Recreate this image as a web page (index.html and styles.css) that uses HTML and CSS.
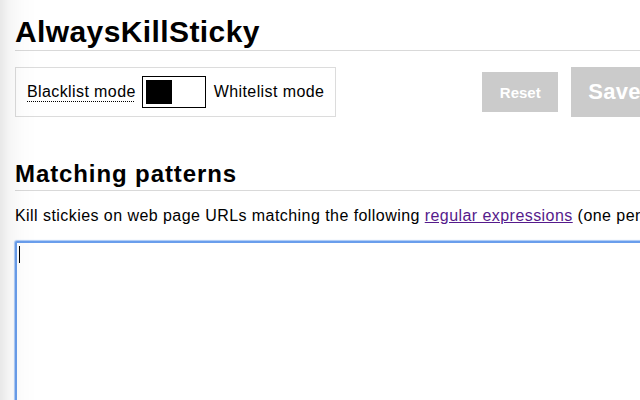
FILE: index.html
```html
<!DOCTYPE html>
<html lang="en">
<head>
<meta charset="utf-8">
<title>AlwaysKillSticky</title>
<link rel="stylesheet" href="styles.css">
</head>
<body>
<div class="shade"></div>
<main class="page">
  <h1 class="title">AlwaysKillSticky</h1>
  <div class="controls">
    <div class="mode-box">
      <span class="mode-label dotted">Blacklist mode</span>
      <span class="switch"><span class="knob"></span></span>
      <span class="mode-label">Whitelist mode</span>
    </div>
    <button class="btn btn-reset">Reset</button>
    <button class="btn btn-save">Save</button>
  </div>
  <h2 class="section-title">Matching patterns</h2>
  <p class="desc">Kill stickies on web page URLs matching the following <a class="link" href="#">regular expressions</a> (one per line):</p>
  <div class="patterns"><span class="caret"></span></div>
</main>
</body>
</html>
```

FILE: styles.css
```css
html, body {
  margin: 0;
  padding: 0;
  background: #ffffff;
  overflow: hidden;
  width: 640px;
  height: 400px;
}

body {
  font-family: "Liberation Sans", Arial, sans-serif;
  color: #000;
}

.shade {
  position: fixed;
  left: 0;
  top: 0;
  width: 40px;
  height: 100%;
  background: linear-gradient(to right, rgba(0,0,0,0.09) 0px, rgba(0,0,0,0.035) 10px, rgba(0,0,0,0.01) 22px, rgba(0,0,0,0) 36px);
  pointer-events: none;
  z-index: 5;
}

.page {
  width: 760px;
  padding-left: 15px;
}

.title {
  margin: 0;
  padding: 15px 0 1px 0;
  font-size: 30px;
  line-height: 34px;
  font-weight: 700;
  letter-spacing: 0.4px;
  border-bottom: 1px solid #d9d9d9;
}

.controls {
  display: flex;
  align-items: center;
  margin-top: 16px;
  height: 50px;
}

.mode-box {
  display: flex;
  align-items: center;
  flex: none;
  box-sizing: border-box;
  height: 50px;
  padding: 0 11px;
  border: 1px solid #dcdcdc;
  font-size: 16px;
  letter-spacing: 0.4px;
  white-space: nowrap;
}

.mode-label {
  line-height: 20px;
  white-space: nowrap;
}

.dotted {
  text-decoration: underline dotted #000;
  text-decoration-thickness: 1px;
  text-underline-offset: 4px;
}

.switch {
  display: flex;
  align-items: center;
  flex: none;
  box-sizing: border-box;
  width: 64px;
  height: 32px;
  margin: 0 8px 0 6px;
  padding: 0 3px;
  border: 1px solid #000;
  background: #fff;
}

.knob {
  display: block;
  width: 26px;
  height: 24px;
  background: #000;
}

.btn {
  flex: none;
  border: none;
  background: #cbcbcb;
  color: #fff;
  font-family: "Liberation Sans", Arial, sans-serif;
  font-weight: 700;
  padding: 0 17px;
  margin: 0;
}

.btn-reset {
  margin-left: 146px;
  height: 40px;
  font-size: 15px;
  width: 76px;
}

.btn-save {
  margin-left: 13px;
  height: 50px;
  font-size: 22px;
  letter-spacing: 0.3px;
}

.section-title {
  margin: 43px 0 0 0;
  padding-bottom: 2px;
  font-size: 24px;
  line-height: 28px;
  font-weight: 700;
  letter-spacing: 0.9px;
  border-bottom: 1px solid #d9d9d9;
}

.desc {
  margin: 15px 0 0 0;
  font-size: 16px;
  line-height: 20px;
  letter-spacing: 0.44px;
  white-space: nowrap;
}

.link {
  color: #551a8b;
  text-decoration: underline;
}

.patterns {
  box-sizing: border-box;
  margin-top: 15px;
  width: 700px;
  height: 300px;
  border: 2px solid #6a9eec;
  box-shadow: 0 0 1px 1px #a9c8f5;
  border-radius: 2px;
  padding: 3px 2px;
  background: #fff;
}

.caret {
  display: block;
  width: 1px;
  height: 17px;
  background: #000;
}
```
